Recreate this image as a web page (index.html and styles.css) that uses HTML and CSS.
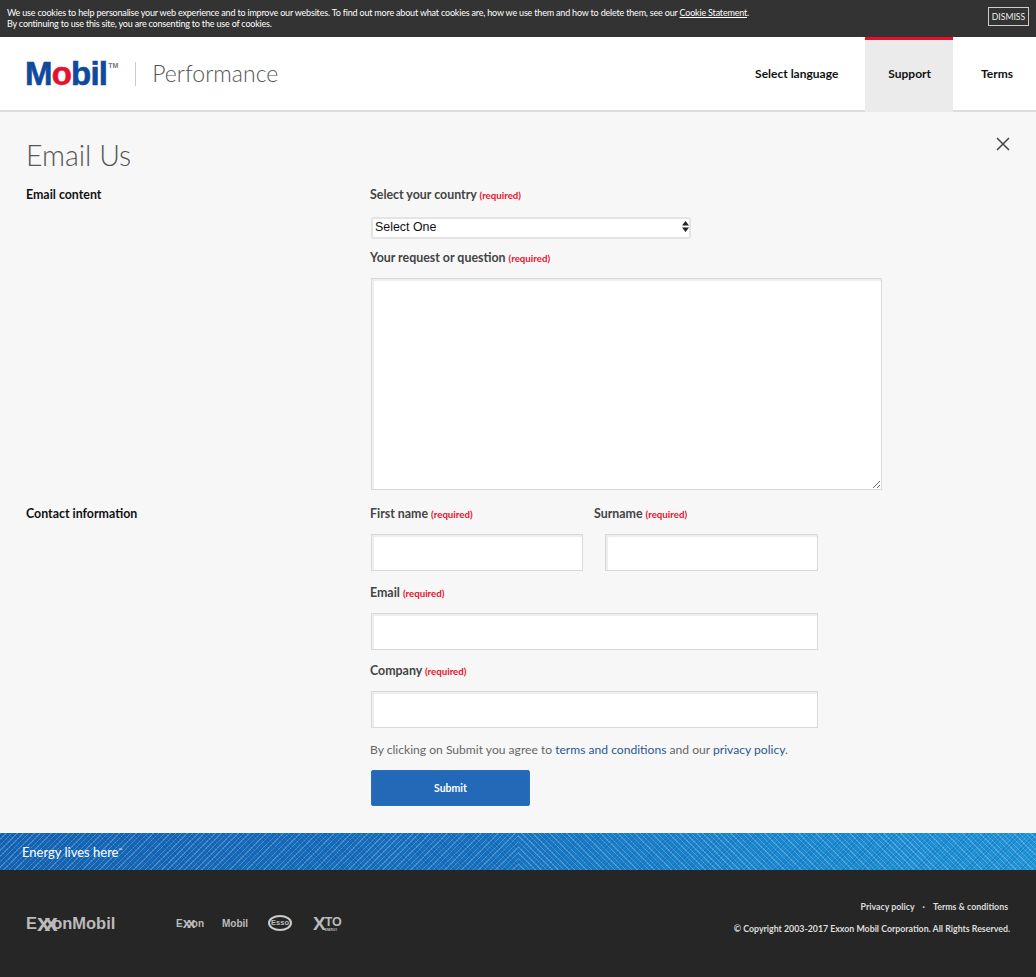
FILE: index.html
```html
<!DOCTYPE html>
<html>
<head>
    <title>Email Us</title>
    <link rel="stylesheet" href="styles.css">
</head>
<body>
    <div class="cookie-bar">
        <p class="cookie-text">We use cookies to help personalise your web experience and to improve our websites. To find out more about what cookies are, how we use them and how to delete them, see our <a href="#">Cookie Statement</a>.<br>By continuing to use this site, you are consenting to the use of cookies.</p>
        <button class="dismiss" type="button">DISMISS</button>
    </div>

    <header class="site-header">
        <div class="brand">
            <span class="mobil-logo">M<span class="mobil-o">o</span>bil<sup class="tm">TM</sup></span>
            <span class="brand-name">Performance</span>
        </div>
        <nav class="main-nav">
            <a class="nav-item lang" href="#">Select language</a>
            <a class="nav-item active" href="#">Support</a>
            <a class="nav-item terms" href="#">Terms</a>
        </nav>
    </header>

    <main class="content">
        <div class="title-row">
            <h1>Email Us</h1>
            <svg class="close-icon" width="14" height="14" viewBox="0 0 14 14">
                <path d="M1 1L13 13M13 1L1 13" stroke="#444" stroke-width="1.5" fill="none"/>
            </svg>
        </div>

        <form id="emailForm">
            <section class="form-row">
                <h2>Email content</h2>
                <div class="fields">
                    <label for="country">Select your country <span class="req">(required)</span></label>
                    <div class="select-wrap">
                        <select id="country" name="country">
                            <option>Select One</option>
                        </select>
                        <svg class="select-arrows" width="7" height="11" viewBox="0 0 7 11">
                            <path d="M3.5 0L7 4.5H0zM3.5 11L0 6.5H7z" fill="#222"/>
                        </svg>
                    </div>
                    <label for="question">Your request or question <span class="req">(required)</span></label>
                    <textarea id="question" name="question"></textarea>
                </div>
            </section>

            <section class="form-row contact-row">
                <h2>Contact information</h2>
                <div class="fields">
                    <div class="name-row">
                        <div class="name-col">
                            <label for="first">First name <span class="req">(required)</span></label>
                            <input type="text" id="first" name="first">
                        </div>
                        <div class="name-col second">
                            <label for="surname">Surname <span class="req">(required)</span></label>
                            <input type="text" id="surname" name="surname">
                        </div>
                    </div>
                    <label for="email">Email <span class="req">(required)</span></label>
                    <input class="wide" type="text" id="email" name="email">
                    <label for="company">Company <span class="req">(required)</span></label>
                    <input class="wide" type="text" id="company" name="company">
                    <p class="agree">By clicking on Submit you agree to <a href="#">terms and conditions</a> and our <a href="#">privacy policy</a>.</p>
                    <button class="submit" type="submit">Submit</button>
                </div>
            </section>
        </form>
    </main>

    <div class="energy-band">
        <span class="tagline">Energy lives here<sup>™</sup></span>
    </div>

    <footer class="site-footer">
        <div class="logos">
            <span class="exxonmobil">E<span class="xx">xx</span>onMobil</span>
            <span class="mini exxon">E<span class="xx">xx</span>on</span>
            <span class="mini mobil">Mobil</span>
            <span class="mini esso">Esso</span>
            <span class="mini xto">
                <span class="xto-x">X</span>
                <span class="xto-rest">TO<small>ENERGY</small></span>
            </span>
        </div>
        <div class="legal">
            <div class="legal-links"><a href="#">Privacy policy</a><span class="dot">·</span><a href="#">Terms &amp; conditions</a></div>
            <div class="copyright">© Copyright 2003-2017 Exxon Mobil Corporation. All Rights Reserved.</div>
        </div>
    </footer>
</body>
</html>
```

FILE: styles.css
```css
* {
    box-sizing: border-box;
}

body {
    font-family: Lato, Arial, sans-serif;
    background-color: #f7f7f7;
    color: #444;
    margin: 0;
    padding: 0;
}

a {
    color: inherit;
    text-decoration: none;
}

.cookie-bar {
    background-color: #333;
    color: #fff;
    height: 37px;
    display: flex;
    justify-content: space-between;
    padding: 7px 7px 0 7px;
}

.cookie-text {
    margin: 0;
    font-size: 9px;
    letter-spacing: -0.19px;
    line-height: 11px;
}

.cookie-text a {
    text-decoration: underline;
}

.dismiss {
    background: none;
    border: 1px solid #ccc;
    color: #eee;
    font-family: inherit;
    font-size: 8.6px;
    width: 41px;
    height: 19px;
    padding: 0;
}

.site-header {
    background-color: #fff;
    height: 75px;
    border-bottom: 2px solid #ddd;
    display: flex;
    justify-content: space-between;
}

.brand {
    display: flex;
    align-items: center;
    padding-left: 25px;
}

.mobil-logo {
    font-family: "Liberation Sans", Arial, sans-serif;
    font-weight: bold;
    font-size: 33px;
    letter-spacing: -0.8px;
    color: #0f4a9c;
    line-height: 1;
    padding-right: 17px;
    border-right: 1px solid #ccc;
    height: 24px;
    display: flex;
    align-items: center;
    -webkit-text-stroke: 0.6px #0f4a9c;
}

.mobil-o {
    color: #e8112d;
    -webkit-text-stroke: 0.6px #e8112d;
}

.tm {
    font-size: 7px;
    color: #777;
    align-self: flex-start;
    margin-left: 1px;
    letter-spacing: 0;
    -webkit-text-stroke: 0;
}

.brand-name {
    font-size: 23px;
    font-weight: 300;
    color: #555;
    margin-left: 16px;
    padding-bottom: 2px;
}

.main-nav {
    display: flex;
}

.nav-item {
    color: #111;
    font-size: 12px;
    font-weight: bold;
    display: flex;
    align-items: center;
    padding: 0 22px 6px 23px;
    border-top: 3px solid transparent;
    margin-bottom: -2px;
}

.nav-item.lang {
    padding-right: 27px;
}

.nav-item.terms {
    padding-left: 28px;
    padding-right: 23px;
}

.nav-item.active {
    background-color: #ebebeb;
    border-top-color: #e8112d;
}

.content {
    padding: 25px 26px 27px;
}

.title-row {
    display: flex;
    justify-content: space-between;
    margin-bottom: 12px;
}

h1 {
    margin: 0;
    font-size: 28.5px;
    font-weight: 300;
    line-height: 36px;
    color: #555;
}

.close-icon {
    margin-top: 0;
}

.form-row {
    display: flex;
}

.form-row h2 {
    margin: 0;
    width: 344px;
    font-size: 12.4px;
    font-weight: bold;
    color: #111;
    line-height: 20px;
}

.fields {
    flex: 1;
}

label {
    display: block;
    font-size: 12.4px;
    font-weight: bold;
    color: #444;
    line-height: 20px;
    margin-bottom: 10px;
}

.req {
    font-size: 9.7px;
    line-height: 1;
    font-weight: bold;
    color: #e8112d;
}

.select-wrap {
    position: relative;
    width: 320px;
    height: 22px;
    margin: 0 0 11px 1px;
}

select {
    appearance: none;
    width: 100%;
    height: 100%;
    background: #fff;
    border: 2px solid #e4e4e4;
    border-radius: 3px;
    font-family: "Liberation Sans", Arial, sans-serif;
    font-size: 12.4px;
    color: #111;
    padding: 0 0 2px 2px;
}

.select-arrows {
    position: absolute;
    right: 2px;
    top: 6px;
}

textarea {
    display: block;
    width: 511px;
    height: 212px;
    margin-left: 1px;
    background: #fff;
    border: 1px solid #d8d8d8;
    box-shadow: inset 2px 2px 1px #eee;
}

input[type="text"] {
    display: block;
    height: 37px;
    margin-left: 1px;
    background: #fff;
    border: 1px solid #d8d8d8;
    box-shadow: inset 2px 2px 1px #eee;
}

.contact-row {
    padding-top: 14px;
}

.name-row {
    display: flex;
    margin-bottom: 12px;
}

.name-col {
    width: 224px;
}

.name-col input[type="text"] {
    width: 212px;
}

.name-col.second input[type="text"] {
    width: 213px;
    margin-left: 11px;
}

input.wide[type="text"] {
    width: 447px;
    margin-bottom: 11px;
}

.agree {
    margin: 12px 0 0 0;
    font-size: 12.1px;
    line-height: 20px;
    color: #666;
}

.agree a {
    color: #2a5694;
}

.submit {
    display: block;
    width: 159px;
    height: 36px;
    margin: 10px 0 0 1px;
    background-color: #2468b8;
    color: #fff;
    border: 1px solid #2a6fc0;
    border-radius: 2px;
    font-family: inherit;
    font-size: 10.5px;
    font-weight: bold;
}

.energy-band {
    height: 37px;
    display: flex;
    align-items: center;
    padding-left: 22px;
    background:
        repeating-linear-gradient(45deg, rgba(10, 70, 150, 0.3) 0 1px, transparent 1px 3px) left / 50% 100% no-repeat,
        repeating-linear-gradient(135deg, rgba(255, 255, 255, 0.24) 0 1px, transparent 1px 4px) left / 50% 100% no-repeat,
        repeating-linear-gradient(135deg, rgba(10, 90, 170, 0.3) 0 1px, transparent 1px 3px) right / 50% 100% no-repeat,
        repeating-linear-gradient(45deg, rgba(255, 255, 255, 0.24) 0 1px, transparent 1px 4px) right / 50% 100% no-repeat,
        linear-gradient(90deg, #1565b5, #1873c0 45%, #1c8ad0 75%, #2196d8);
}

.tagline {
    color: #fff;
    font-size: 13px;
}

.tagline sup {
    font-size: 5px;
}

.site-footer {
    background-color: #262626;
    height: 107px;
    display: flex;
    justify-content: space-between;
    padding: 0 26px;
}

.logos {
    display: flex;
    align-items: center;
    height: 106px;
    color: #bbb;
    font-family: "Liberation Sans", Arial, sans-serif;
    font-weight: bold;
}

.exxonmobil {
    font-size: 16.5px;
    width: 150px;
}

.xx {
    font-size: 1.45em;
    line-height: 0;
    letter-spacing: -0.24em;
    vertical-align: -0.1em;
}

.mini {
    font-size: 10px;
}

.exxon {
    width: 46px;
}

.mobil {
    width: 46px;
}

.esso {
    font-size: 7.5px;
    width: 24px;
    height: 16px;
    line-height: 12px;
    margin-right: 21px;
    text-align: center;
    border: 2px solid #ccc;
    border-radius: 50%;
}

.xto {
    display: flex;
    align-items: flex-start;
    width: 32px;
}

.xto-x {
    font-size: 19px;
    line-height: 17px;
    margin-right: -1px;
}

.xto-rest {
    font-size: 12.5px;
    line-height: 11px;
    padding-top: 2px;
}

.xto-rest small {
    display: block;
    font-size: 3px;
    line-height: 4px;
}

.legal {
    text-align: right;
    color: #ddd;
    font-size: 8.8px;
    font-weight: bold;
    padding-top: 31px;
}

.legal-links {
    padding-right: 2px;
    line-height: 12px;
}

.dot {
    margin: 0 8px;
}

.copyright {
    margin-top: 10px;
    line-height: 12px;
}
```
